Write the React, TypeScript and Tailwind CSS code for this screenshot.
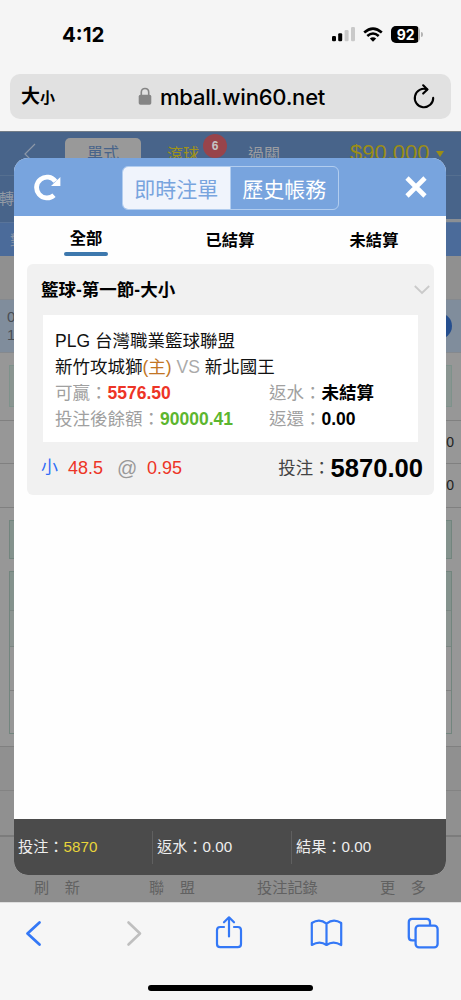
import { useState } from 'react';
import clsx from 'clsx';

const summary = [
  { label: '投注', value: '5870', highlight: true },
  { label: '返水', value: '0.00', highlight: false },
  { label: '結果', value: '0.00', highlight: false },
];

function StatusBar() {
  return (
    <div className="h-[74px] pt-[21px] pl-[62px] pr-[38px] flex items-start justify-between">
      <span className="w-[60px] text-[20.5px] leading-[27px] font-bold">4:12</span>
      <div className="flex items-center h-[27px]">
        <svg className="-mt-[2px]" width="24" height="16" viewBox="0 0 24 16">
          <rect x="0" y="10" width="4" height="5.3" rx="1.2" fill="#000" />
          <rect x="6.2" y="7.3" width="4" height="8" rx="1.2" fill="#000" />
          <rect x="12.6" y="4" width="4" height="11.3" rx="1.2" fill="#c9c9c9" />
          <rect x="19" y="1" width="4" height="14.3" rx="1.2" fill="#c9c9c9" />
        </svg>
        <svg className="ml-[7px]" width="20" height="15" viewBox="0 0 20 15" fill="none" stroke="#000" strokeWidth="2.6">
          <path d="M1.2 5.5 Q10 -2.3 18.8 5.5" />
          <path d="M4.3 9 Q10 4 15.7 9" />
          <path d="M10 14.7 L6.8 11.4 Q10 8.9 13.2 11.4 Z" fill="#000" stroke="none" />
        </svg>
        <div className="ml-2 w-[29px] h-[17px] rounded-[5px] overflow-hidden bg-[#b4b4b4]">
          <div className="w-[27px] h-full bg-black text-white text-[14px] leading-[17px] font-bold text-center pl-0.5 tracking-[-0.2px]">
            92
          </div>
        </div>
        <div className="ml-px w-[2px] h-[5px] rounded-r-full bg-[#b4b4b4]" />
      </div>
    </div>
  );
}

function AddressBar() {
  return (
    <div className="mx-[10px] h-[45px] rounded-[10px] bg-[#e1e1e1] flex items-center pl-[11px] pr-[15px]">
      <span className="font-bold text-[19px] leading-none w-[117px]">
        大<span className="text-[15px]">小</span>
      </span>
      <svg className="mr-[8px] shrink-0" width="14" height="19" viewBox="0 0 14 19">
        <rect x="0.7" y="7.7" width="12.6" height="10" rx="1.8" fill="#858585" />
        <path d="M3.3 8.5V5.3C3.3 0.2 10.7 0.2 10.7 5.3V8.5" fill="none" stroke="#858585" strokeWidth="1.6" />
      </svg>
      <span className="text-[22px] leading-[30px] font-medium tracking-[-0.22px] whitespace-nowrap">mball.win60.net</span>
      <svg className="ml-auto" width="24" height="26" viewBox="0 0 24 26" fill="none" stroke="#000" strokeWidth="2.1" strokeLinecap="round" strokeLinejoin="round">
        <path d="M15.2 5.4A9.2 9.2 0 1 0 21.2 13.9" />
        <path d="M11.2 1.3L15.4 5.4L11.2 9.6" />
      </svg>
    </div>
  );
}

function DimmedPage() {
  return (
    <div className="h-full flex flex-col bg-[#979797] overflow-hidden">
      <div className="h-[45px] shrink-0 bg-[#48648a] border-t border-[#737d88] border-b border-b-[#556f90] flex items-start text-[16px]">
        <svg className="ml-[23px] mt-[11px]" width="13" height="22" viewBox="0 0 13 22" fill="none" stroke="#8d98a7" strokeWidth="1.2">
          <path d="M12 1L2 11L12 21" />
        </svg>
        <div className="ml-[29px] mt-[6px] w-[76px] h-[32px] rounded-[5px] bg-[#999] text-[#48648a] text-center leading-[32px]">單式</div>
        <span className="ml-[26px] mt-[11px] text-[#a09318]">滾球</span>
        <div className="ml-[4px] mt-[2px] w-[24px] h-[24px] rounded-full bg-[#98444b] text-[#c5c5c5] text-[12px] leading-[24px] text-center font-bold">6</div>
        <span className="ml-[21px] mt-[11px] text-[#9b9da1]">過關</span>
        <span className="ml-[70px] mt-[6px] text-[22px] leading-[30px] text-[#9b8d16] whitespace-nowrap">$90,000</span>
        <span className="ml-[6px] mt-[19px] border-x-[4.5px] border-x-transparent border-t-[6px] border-t-[#9b8d16]" />
      </div>
      <div className="h-[46px] shrink-0 bg-[#48648a] flex items-end justify-between">
        <span className="self-center text-[15px] text-[#929aa5] -ml-px">轉</span>
        <span className="w-[30px] h-[3px] bg-[#8b8f94]" />
      </div>
      <div className="h-[34px] shrink-0 bg-[#4b6b9a] border-t border-[#59749a] text-[14px] leading-[34px] pl-[10px] text-[#8994a5]">對</div>
      <div className="h-[43px] shrink-0 bg-[#909090]" />
      <div className="h-[54px] shrink-0 bg-[#808d9c] border-y border-[#85898e] flex items-center justify-between">
        <div className="ml-[7px] text-[15px] leading-[18px] text-[#494e54]">
          <div>0</div>
          <div>1</div>
        </div>
        <div className="mr-[9px] w-[26px] h-[26px] rounded-full bg-[#254e8e]" />
      </div>
      <div className="mx-[9px] mt-[12px] h-[42px] shrink-0 border border-[#7e928b] bg-[#8a9591]" />
      <div className="mt-[13px] h-[43px] shrink-0 border-t border-[#808080] text-[14px] leading-[43px] text-right pr-[7px] text-[#222]">0</div>
      <div className="h-[44px] shrink-0 border-t border-[#808080] text-[14px] leading-[43px] text-right pr-[7px] text-[#222]">0</div>
      <div className="h-[13px] shrink-0 border-t border-[#808080]" />
      <div className="mx-[9px] h-[39px] shrink-0 border border-[#72857e] bg-[#84928d]" />
      <div className="mx-[9px] mt-[12px] h-[163px] shrink-0 border border-[#72857e]">
        <div className="h-[38px] bg-[#84928d]" />
        <div className="h-[37px] border-y border-[#7b8682] bg-[#8c9491]" />
        <div className="h-[43px]" />
        <div className="border-t border-[#808080]" />
      </div>
      <div className="mt-[12px] h-[44px] shrink-0 border-t border-[#808080] bg-[#909090]" />
      <div className="h-[45px] shrink-0 border-t border-[#838383] bg-[#909090]" />
      <div className="grow border-t-2 border-[#7c7c7c] bg-[#8e8e8e] flex items-end text-[15.2px] leading-[20px] text-[#616161] pb-[4px] whitespace-nowrap">
        <span className="ml-[34px] w-[115px] tracking-[15.5px]">刷新</span>
        <span className="w-[108px] tracking-[15.5px]">聯盟</span>
        <span className="w-[123px]">投注記錄</span>
        <span className="tracking-[15.5px]">更多</span>
      </div>
    </div>
  );
}

function BetCard() {
  return (
    <div className="ml-[13px] w-[407px] h-[231px] shrink-0 rounded-[6px] bg-[#f1f1f1] text-[17.5px]">
      <div className="h-[51px] pl-[14px] pr-[4px] flex items-center justify-between">
        <span className="font-bold pt-px">籃球-第一節-大小</span>
        <svg width="16" height="10" viewBox="0 0 16 10" fill="none" stroke="#cacaca" strokeWidth="1.8">
          <path d="M0.8 1L8 8L15.2 1" />
        </svg>
      </div>
      <div className="ml-[16px] w-[375px] h-[127px] bg-white pl-[12px] pt-[13px] leading-[26px] text-[#111] whitespace-nowrap">
        <div className="h-[26px]">PLG 台灣職業籃球聯盟</div>
        <div className="h-[26px]">
          新竹攻城獅<span className="text-[#c27624]">(主)</span> <span className="text-[#aaa]">VS</span> 新北國王
        </div>
        <div className="h-[26px] flex text-[#a0a0a0]">
          <div className="w-[214px]">可贏：<b className="text-[#ed3426]">5576.50</b></div>
          <div>返水：<b className="text-black">未結算</b></div>
        </div>
        <div className="h-[26px] flex text-[#a0a0a0]">
          <div className="w-[214px]">投注後餘額：<b className="text-[#5cb62f]">90000.41</b></div>
          <div>返還：<b className="text-black">0.00</b></div>
        </div>
      </div>
      <div className="h-[52px] pl-[14px] pr-[11px] flex items-center whitespace-nowrap text-[#ed3426] text-[18px]">
        <span className="text-[17px] text-[#2f6cf6] w-[27px]">小</span>
        <span className="w-[49px]">48.5</span>
        <span className="text-[20px] text-[#999] w-[30px]">@</span>
        <span>0.95</span>
        <span className="ml-auto flex items-center text-[#444] text-[17.4px]">
          投注：<b className="text-[25.6px] leading-[30px] text-black">5870.00</b>
        </span>
      </div>
    </div>
  );
}

function BetModal() {
  const [view, setView] = useState('live');
  const [tab, setTab] = useState('全部');

  return (
    <div className="absolute left-[14px] top-[27px] w-[432px] h-[717px] rounded-[14px] overflow-hidden bg-[#fefefe] flex flex-col">
      <div className="h-[58px] shrink-0 bg-[#78a4de] flex items-center pl-[20px] pr-[19px]">
        <svg width="28" height="28" viewBox="0 0 28 28">
          <path d="M20 22.2A10.4 10.4 0 1 1 21.4 8.4" fill="none" stroke="#fff" strokeWidth="4.8" />
          <path d="M26.4 4V13H17Z" fill="#fff" />
        </svg>
        <div className="ml-[60px] w-[217px] h-[44px] mt-[1px] rounded-[6px] border border-[#b2cdef] overflow-hidden flex text-[21px] leading-[45px] text-center">
          <button
            onClick={() => setView('live')}
            className={clsx('w-1/2 border-r border-[#b2cdef]', view === 'live' ? 'bg-[#f0f4fc] text-[#78a4de]' : 'text-white')}
          >
            即時注單
          </button>
          <button
            onClick={() => setView('history')}
            className={clsx('w-1/2', view === 'history' ? 'bg-[#f0f4fc] text-[#78a4de]' : 'text-white')}
          >
            歷史帳務
          </button>
        </div>
        <svg className="ml-auto" width="22" height="22" viewBox="0 0 22 22" stroke="#fff" strokeWidth="4.6">
          <path d="M2 2L20 20M20 2L2 20" />
        </svg>
      </div>

      {/* Filter tabs */}
      <div className="h-[48px] shrink-0 grid grid-cols-3 text-[16.3px] font-bold leading-[22px]">
        {['全部', '已結算', '未結算'].map((name) => (
          <button key={name} onClick={() => setTab(name)} className="flex flex-col items-center pt-[11px]">
            <span className={clsx(tab !== name && 'pt-[2px]')}>{name}</span>
            {tab === name && <span className="mt-[3px] w-[44px] h-[4px] rounded-full bg-[#3d78ad]" />}
          </button>
        ))}
      </div>

      <BetCard />

      <div className="mt-auto h-[56px] shrink-0 bg-[#4b4b4b] text-[#eee] text-[15.2px] flex items-center">
        {summary.map((item, i) => (
          <div
            key={item.label}
            className={clsx('h-[33px] pl-[4px] leading-[31px]', i > 0 ? 'w-[139px] border-l border-[#606060]' : 'w-[138px]')}
          >
            {item.label}：<span className={clsx(item.highlight && 'text-[#e8d43a]')}>{item.value}</span>
          </div>
        ))}
      </div>
    </div>
  );
}

function Toolbar() {
  return (
    <div className="h-[98px] bg-[#f6f6f6] border-t border-[#dedede] flex flex-col items-center">
      <div className="h-[60px] w-full pl-[25px] flex items-center text-[#3478f6]">
        <svg width="17" height="27" viewBox="0 0 17 27" fill="none" stroke="currentColor" strokeWidth="2.8" strokeLinecap="round" strokeLinejoin="round">
          <path d="M14.5 2.5L2.5 13.5L14.5 24.5" />
        </svg>
        <svg className="ml-[83px]" width="17" height="27" viewBox="0 0 17 27" fill="none" stroke="#bfbfbf" strokeWidth="2.6" strokeLinecap="round" strokeLinejoin="round">
          <path d="M3.5 2.5L15 13.5L3.5 24.5" />
        </svg>
        <svg className="ml-[73px] -mt-[2px]" width="28" height="35" viewBox="0 0 28 35" fill="none" stroke="currentColor" strokeWidth="2.2" strokeLinecap="round" strokeLinejoin="round">
          <path d="M9 12H5.2Q2 12 2 15.2V29Q2 32.2 5.2 32.2H22.8Q26 32.2 26 29V15.2Q26 12 22.8 12H19" />
          <path d="M14 21.5V2.5M9 7.3L14 2.3L19 7.3" />
        </svg>
        <svg className="ml-[67px]" width="33" height="28" viewBox="0 0 33 28" fill="none" stroke="currentColor" strokeWidth="2.2" strokeLinejoin="round">
          <path d="M16.5 4.6Q9.5 -1 1.8 4V26Q9.8 21.2 16.5 26Q23.2 21.2 31.2 26V4Q23.5 -1 16.5 4.6V26" />
        </svg>
        <svg className="ml-[64px]" width="32" height="32" viewBox="0 0 32 32" fill="none" stroke="currentColor" strokeWidth="2.3">
          <rect x="8.6" y="8.6" width="22" height="21.8" rx="3.4" />
          <path d="M8.6 23.4H5.2Q1.8 23.4 1.8 20V5.2Q1.8 1.8 5.2 1.8H19.6Q23 1.8 23 5.2V8.6" />
        </svg>
      </div>
      <div className="mt-[22px] w-[165px] h-[6px] rounded-full bg-black" />
    </div>
  );
}

export default function App() {
  return (
    <div className="w-[461px] h-[1000px] overflow-hidden bg-[#f5f5f5] font-['Liberation_Sans','Noto_Sans_CJK_TC',sans-serif] text-black">
      <div className="h-[131px] font-['Inter','Noto_Sans_CJK_TC',sans-serif]">
        <StatusBar />
        <AddressBar />
      </div>
      <div className="relative h-[771px]">
        <DimmedPage />
        <BetModal />
      </div>
      <Toolbar />
    </div>
  );
}
